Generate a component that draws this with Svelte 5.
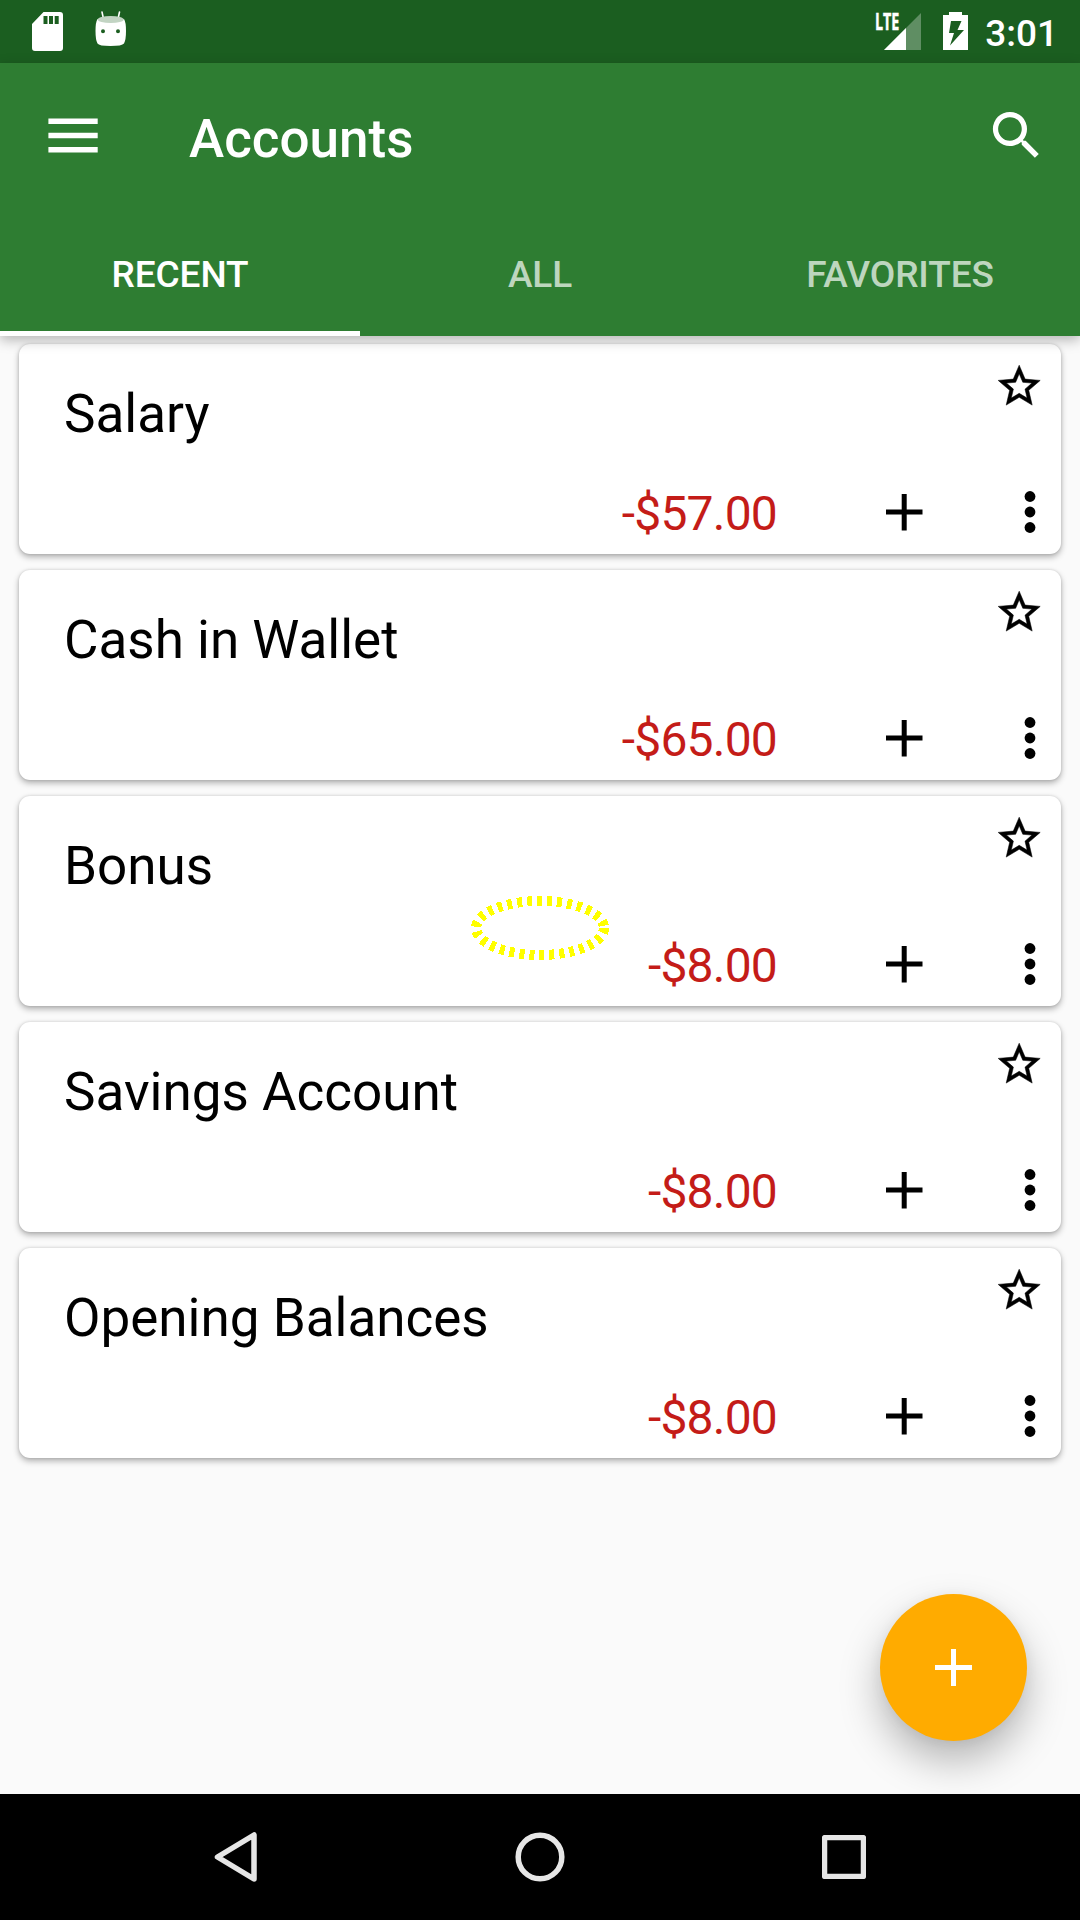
<script>
  const tabs = ['RECENT', 'ALL', 'FAVORITES'];
  let active = $state(0);
  const accounts = [
    { name: 'Salary', balance: '-$57.00' },
    { name: 'Cash in Wallet', balance: '-$65.00' },
    { name: 'Bonus', balance: '-$8.00' },
    { name: 'Savings Account', balance: '-$8.00' },
    { name: 'Opening Balances', balance: '-$8.00' }
  ];
</script>

<div class="screen">
  <div class="status">
    <svg class="sd" width="31" height="39" viewBox="0 0 31 39">
      <path fill="#fff" fill-rule="evenodd" d="M11.5 0H28a3 3 0 0 1 3 3v33a3 3 0 0 1-3 3H3a3 3 0 0 1-3-3V12zM11.5 4v8h4V4zM17 4v8h4V4zM22.7 4v8h4V4z" />
    </svg>
    <svg class="droid" width="32" height="37" viewBox="0 0 32 37">
      <path d="M7 2l1.500 7M24.500 2l-1.500 7" stroke="#fff" stroke-width="1.600" stroke-linecap="round" />
      <path fill="#fff" fill-rule="evenodd" d="M2.500 9Q15.500 15.500 29 9Q31 12 31 21Q31 30 29 33.500Q27 36 15.500 36Q4 36 2.500 33.500Q.5 30 .5 21Q.5 12 2.500 9zM6 21.200a2 2 0 1 0 4 0a2 2 0 1 0-4 0zM21 21.200a2 2 0 1 0 4 0a2 2 0 1 0-4 0z" />
      <ellipse cx="15.700" cy="9.500" rx="13" ry="3.600" fill="#c2d4c3" />
    </svg>
    <div class="signal">
      <span>LTE</span>
      <svg width="37" height="37" viewBox="0 0 37 37">
        <path d="M37 0v37H0z" fill="#fff" opacity=".3" />
        <path d="M22 15v22H0z" fill="#fff" />
      </svg>
    </div>
    <svg class="battery" width="25" height="38" viewBox="0 0 25 38">
      <path fill="#fff" fill-rule="evenodd" d="M6 0h13v3h6v35H0V3h6zM8 9L6 21h5L7 33.500L21 18h-6.500L18.500 9z" />
    </svg>
    <span class="clock">3:01</span>
  </div>

  <header>
    <div class="toolbar">
      <svg class="menu" width="50" height="35" viewBox="0 0 50 35">
        <path d="M.4 3.200h49.300M.4 17.500h49.300M.4 31.700h49.300" stroke="#fff" stroke-width="5.500" />
      </svg>
      <h1>Accounts</h1>
      <svg class="search" width="63" height="63" viewBox="0 0 24 24">
        <path fill="#fff" d="M15.500 14h-.79l-.28-.27A6.471 6.471 0 0 0 16 9.500 6.500 6.500 0 1 0 9.500 16c1.610 0 3.090-.59 4.230-1.570l.27.28v.79l5 4.990L20.490 19l-4.990-5zm-6 0C7.010 14 5 11.990 5 9.500S7.010 5 9.500 5 14 7.010 14 9.500 11.990 14 9.500 14z" />
      </svg>
    </div>
    <nav>
      {#each tabs as tab, i}
        <button class:active={active === i} onclick={() => (active = i)}>{tab}</button>
      {/each}
    </nav>
  </header>

  <main>
    {#each accounts as account}
      <article>
        <div class="top">
          <h2>{account.name}</h2>
          <svg width="50.400" height="50.400" viewBox="0 0 24 24">
            <path stroke="#000" stroke-width=".25" d="M22 9.240l-7.190-.62L12 2 9.190 8.630 2 9.240l5.460 4.730L5.820 21 12 17.270 18.180 21l-1.630-7.030L22 9.240zM12 15.400l-3.760 2.270 1-4.280-3.320-2.880 4.380-.38L12 6.100l1.710 4.040 4.380.38-3.320 2.880 1 4.280L12 15.400z" />
          </svg>
        </div>
        <div class="bottom">
          <span class="amount">{account.balance}</span>
          <svg class="add" width="37" height="37" viewBox="0 0 37 37">
            <path d="M0 18h36.500M18.200 0v36.500" stroke="#000" stroke-width="5" />
          </svg>
          <svg width="12" height="42" viewBox="0 0 12 42">
            <circle cx="6" cy="5.500" r="5.400" /><circle cx="6" cy="21" r="5.400" /><circle cx="6" cy="36.500" r="5.400" />
          </svg>
        </div>
      </article>
    {/each}
    <svg class="spinner" width="140" height="66" viewBox="0 0 140 66" shape-rendering="crispEdges">
      <ellipse cx="70" cy="33" rx="64" ry="27" fill="none" stroke="#ff0" stroke-width="10" stroke-dasharray="5 5" />
    </svg>
    <button class="fab" aria-label="Add account">
      <svg width="37" height="37" viewBox="0 0 37 37">
        <path d="M0 18.500h37M18.500 0v37" stroke="#fff" stroke-width="5" />
      </svg>
    </button>
  </main>

  <footer>
    <svg width="44" height="50" viewBox="0 0 44 50">
      <path d="M41 3v44L4.500 25z" />
    </svg>
    <svg width="50" height="50" viewBox="0 0 50 50">
      <circle cx="25" cy="25" r="21.800" />
    </svg>
    <svg width="44" height="44" viewBox="0 0 44 44">
      <rect x="2.500" y="2.500" width="39" height="39" rx="1" />
    </svg>
  </footer>
</div>

<style>
  :global(body) {
    margin: 0;
  }
  .screen {
    width: 1080px;
    height: 1920px;
    display: flex;
    flex-direction: column;
    overflow: hidden;
    background: #fafafa;
    color: #000;
    font-family: Roboto, sans-serif;
  }
  svg {
    display: block;
    flex: none;
  }
  button {
    border: 0;
    padding: 0;
    font: inherit;
  }
  .status {
    box-sizing: border-box;
    height: 63px;
    flex: none;
    display: flex;
    align-items: flex-start;
    padding: 0 22px 0 32px;
    background: #1b5e20;
    color: #fff;
  }
  .sd {
    margin-top: 12px;
  }
  .droid {
    margin: 10px 0 0 32px;
  }
  .signal {
    display: flex;
    margin: 13px 0 0 auto;
  }
  .signal span {
    width: 23px;
    height: 16px;
    margin-right: -14px;
    font: 700 23px/17px 'Open Sans', sans-serif;
    transform: scaleX(0.62);
    transform-origin: left;
    -webkit-text-stroke: 0.5px #fff;
  }
  .battery {
    margin: 12px 17px 0 22px;
  }
  .clock {
    margin-top: 12px;
    font-size: 37px;
    line-height: 43px;
    font-weight: 500;
  }
  header {
    position: relative;
    z-index: 1;
    height: 273px;
    flex: none;
    display: flex;
    flex-direction: column;
    background: #2e7d32;
    color: #fff;
    box-shadow: 0 4px 12px rgba(0, 0, 0, 0.28);
  }
  .toolbar {
    height: 147px;
    display: flex;
    align-items: center;
    padding: 0 32px 0 48px;
  }
  .menu {
    margin-bottom: 2px;
  }
  .search {
    margin-bottom: 2px;
  }
  h1 {
    flex: 1;
    margin: 4px 0 0 91px;
    font-size: 53px;
    font-weight: 500;
  }
  nav {
    flex: 1;
    display: grid;
    grid-template-columns: repeat(3, 1fr);
  }
  nav button {
    background: none;
    color: rgba(255, 255, 255, 0.7);
    font-size: 37px;
    font-weight: 500;
    letter-spacing: -0.1px;
    padding-top: 2px;
    border-bottom: 5px solid transparent;
    border-top: 5px solid transparent;
  }
  nav button.active {
    color: #fff;
    border-bottom-color: #fff;
  }
  main {
    position: relative;
    flex: 1;
    display: flex;
    flex-direction: column;
    gap: 16px;
    padding: 8px 19px 0;
  }
  article {
    height: 210px;
    display: flex;
    flex-direction: column;
    justify-content: space-between;
    box-sizing: border-box;
    padding: 17px 21px 21px 45px;
    border-radius: 11px;
    background: #fff;
    box-shadow: 0 3px 6px rgba(0, 0, 0, 0.3), 0 0 3px rgba(0, 0, 0, 0.14);
  }
  .top,
  .bottom {
    display: flex;
    justify-content: space-between;
    align-items: flex-start;
  }
  h2 {
    margin: 22px 0 0;
    font-size: 53px;
    line-height: 62px;
    font-weight: 400;
  }
  .top svg {
    margin-right: -4px;
  }
  .bottom {
    justify-content: flex-end;
    align-items: center;
    padding-right: 4px;
  }
  .amount {
    padding-top: 4px;
    font-size: 48px;
    letter-spacing: -0.8px;
    line-height: 38px;
    color: #c41c18;
  }
  .add {
    margin: 0 101px 0 109px;
  }
  .spinner {
    position: absolute;
    left: 470px;
    top: 559px;
  }
  .fab {
    position: absolute;
    left: 880px;
    top: 1258px;
    width: 147px;
    height: 147px;
    border-radius: 50%;
    display: grid;
    place-items: center;
    background: #ffab00;
    box-shadow: 0 20px 40px rgba(0, 0, 0, 0.28), 0 2px 14px rgba(0, 0, 0, 0.05);
  }
  footer {
    position: relative;
    height: 126px;
    flex: none;
    display: flex;
    align-items: center;
    justify-content: space-between;
    box-sizing: border-box;
    padding: 0 214px 0 213px;
    background: #000;
  }
  footer svg {
    fill: none;
    stroke: #e6e6e6;
    stroke-width: 5.5;
    stroke-linejoin: round;
  }
</style>
